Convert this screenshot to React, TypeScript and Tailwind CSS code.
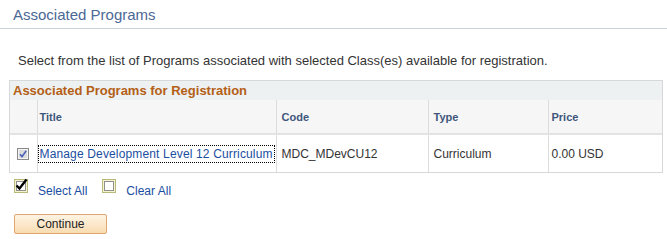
import React from "react";

function GridCheck() {
  return (
    <svg width="12" height="12" viewBox="0 0 12 12">
      <rect x="0.5" y="0.5" width="11" height="11" fill="#e6e6e6" stroke="#8a8a8a" />
      <rect x="1.5" y="1.5" width="9" height="9" fill="#dcdcdc" stroke="#f4f4f4" />
      <path d="M3 6.2 L5 8.6 L9.2 2.8" fill="none" stroke="#4a63b8" strokeWidth="1.6" />
    </svg>
  );
}

function BigCheck({ checked }: { checked: boolean }) {
  return (
    <svg width="14" height="14" viewBox="0 0 14 14" className="overflow-visible">
      <rect x="0.5" y="0.5" width="13" height="13" fill="#f4f4d0" stroke="#b9b97a" />
      <rect x="2.5" y="2.5" width="9" height="9" fill="#ffffff" stroke="#8f8f8f" />
      {checked && (
        <path d="M2.5 6.5 L5.5 9.5 L12.5 0.5" fill="none" stroke="#000" strokeWidth="2.4" />
      )}
    </svg>
  );
}

export default function App() {
  return (
    <div className="w-[667px] h-[239px] bg-white font-['Liberation_Sans',Arial,sans-serif] text-[12px] text-[#333]">
      <div className="h-[29px] border-b border-[#cdd1d8] pl-[13px] pt-[6px]">
        <h1 className="text-[15px] leading-[18px] text-[#4c6895]">Associated Programs</h1>
      </div>

      <p className="pl-[18px] pt-[24px] text-[13px] leading-[15px]">
        Select from the list of Programs associated with selected Class(es) available for registration.
      </p>

      <div className="ml-[9px] mt-[12px] w-[654px] border border-[#d6d8da]">
        <div className="h-[19px] bg-[#edf1f2] pl-[3px] text-[13px] font-bold leading-[19px] text-[#b45f16]">
          Associated Programs for Registration
        </div>
        <table className="w-full table-fixed border-collapse">
          <thead>
            <tr className="h-[34px] bg-[#f6f6f6] border-b-2 border-[#e3e3e3] text-left text-[11px] font-bold text-[#3f577c]">
              <th className="w-[27px] border-r border-[#dcdcdc]"></th>
              <th className="w-[239px] border-r border-[#dcdcdc] pl-[2px] pt-[2px] font-bold">Title</th>
              <th className="w-[152px] border-r border-[#dcdcdc] pl-[5px] pt-[2px] font-bold">Code</th>
              <th className="w-[120px] border-r border-[#dcdcdc] pl-[5px] pt-[2px] font-bold">Type</th>
              <th className="pl-[3px] pt-[2px] font-bold">Price</th>
            </tr>
          </thead>
          <tbody>
            <tr className="h-[38px]">
              <td className="border-r border-[#dcdcdc]">
                <div className="flex justify-center pt-[1px]">
                  <GridCheck />
                </div>
              </td>
              <td className="border-r border-[#dcdcdc] pl-0">
                <a className="inline-block whitespace-nowrap border border-dotted border-black px-[1px] text-[12px] tracking-[0.15px] leading-[16px] text-[#1a4ea1]">
                  Manage Development Level 12 Curriculum
                </a>
              </td>
              <td className="border-r border-[#dcdcdc] pl-[5px]">MDC_MDevCU12</td>
              <td className="border-r border-[#dcdcdc] pl-[5px]">Curriculum</td>
              <td className="pl-[3px]">0.00 USD</td>
            </tr>
          </tbody>
        </table>
      </div>

      <div className="mt-[6px] flex h-[18px] items-start pl-[14px] text-[#1a4ea1]">
        <BigCheck checked />
        <span className="ml-[10px] mt-[5px] leading-[14px]">Select All</span>
        <span className="ml-[15px]">
          <BigCheck checked={false} />
        </span>
        <span className="ml-[10px] mt-[5px] leading-[14px]">Clear All</span>
      </div>

      <div className="mt-[17px] pl-[14px]">
        <button className="block h-[20px] w-[93px] rounded-[2px] border border-[#e0a670] bg-gradient-to-b from-[#fef4e4] to-[#f9dcb2] text-[12px] leading-[18px] text-[#222]">
          Continue
        </button>
      </div>
    </div>
  );
}
